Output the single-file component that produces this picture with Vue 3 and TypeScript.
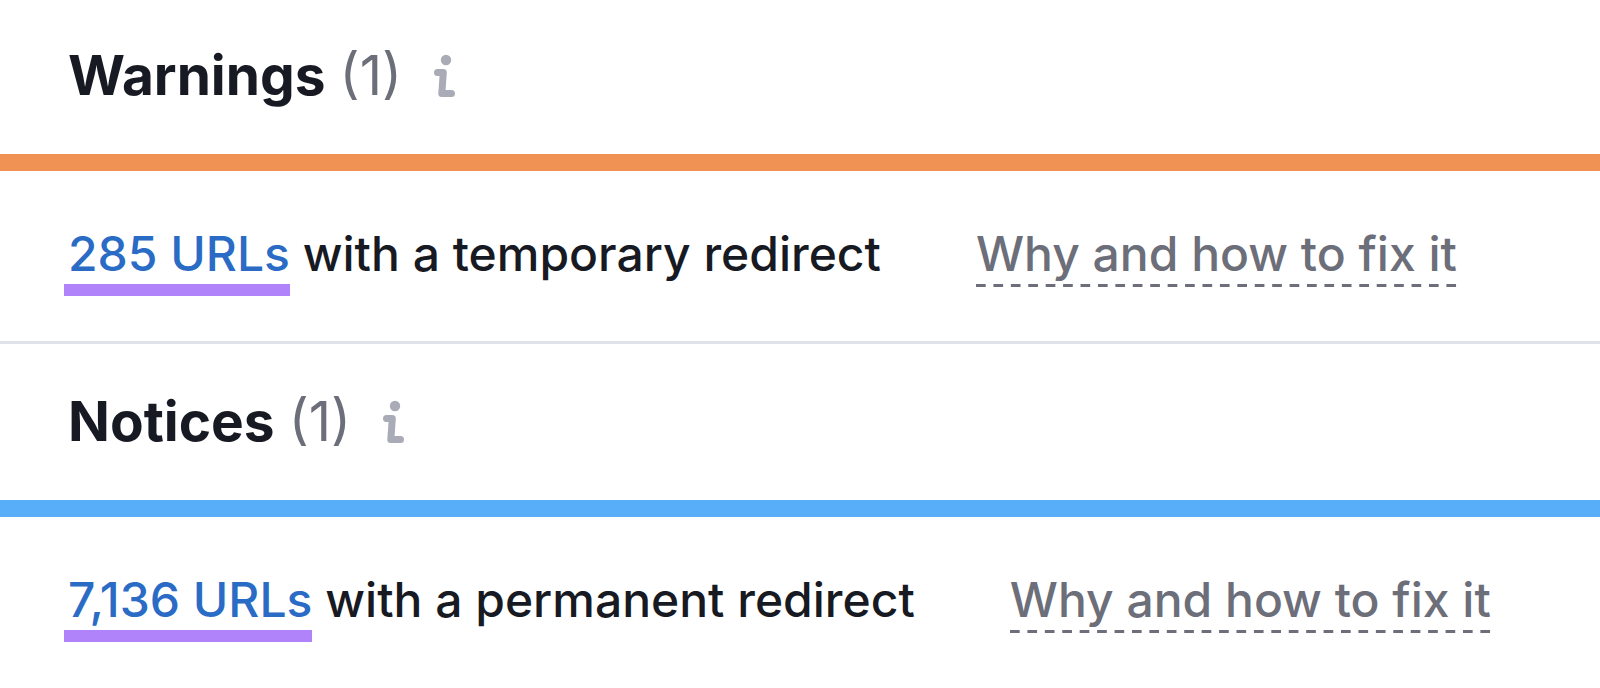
<script setup lang="ts">
interface Group {
  key: string
  title: string
  count: number
  urls: string
  text: string
}
const groups: Group[] = [
  { key: 'warning', title: 'Warnings', count: 1, urls: '285 URLs', text: 'with a temporary redirect' },
  { key: 'notice', title: 'Notices', count: 1, urls: '7,136 URLs', text: 'with a permanent redirect' },
]
</script>

<template>
  <main class="issues">
    <section v-for="g in groups" :key="g.key" class="group" :class="g.key">
      <header class="head">
        <h2 class="title">{{ g.title }}</h2>
        <span class="count">({{ g.count }})</span>
        <button class="info" type="button" :aria-label="'About ' + g.title">
          <svg width="22" height="43" viewBox="0 0 22 43" fill="none">
            <circle cx="12" cy="6" r="5.2" fill="currentColor" />
            <path d="M3.5 18.5H9.3L7.8 39.5H17.5" stroke="currentColor" stroke-width="7" stroke-linecap="round" stroke-linejoin="round" />
          </svg>
        </button>
      </header>
      <div class="row">
        <p class="issue"><a class="urls" href="#">{{ g.urls }}</a> {{ g.text }}</p>
        <button class="fix" type="button">Why and how to fix it</button>
      </div>
    </section>
  </main>
</template>

<style>
body {
  margin: 0;
  background: #fff;
}
</style>

<style scoped>
.issues {
  font-family: Inter, "Liberation Sans", sans-serif;
  color: #171a22;
}
.group + .group {
  border-top: 3px solid #e0e1e9;
}
.head {
  display: flex;
  align-items: center;
  padding: 43px 68px 47px;
  border-bottom: 17px solid #ef9253;
}
.notice .head {
  padding-top: 45px;
  border-bottom-color: #59aefa;
}
.title {
  margin: 0;
  font-size: 55px;
  line-height: 64px;
  font-weight: 700;
}
.count {
  margin-left: 14px;
  font-size: 55px;
  line-height: 64px;
  color: #6c6e79;
}
.info {
  display: flex;
  margin: 0 0 0 32px;
  padding: 0;
  border: 0;
  background: none;
  color: #a9abb6;
}
.row {
  display: flex;
  align-items: flex-start;
  gap: 95px;
  padding: 53px 68px 57px;
  font-size: 48px;
  line-height: 60px;
  font-weight: 450;
  white-space: nowrap;
}
.issue {
  margin: 0;
}
.urls {
  position: relative;
  color: #2a6bc5;
  text-decoration: none;
}
.urls::after {
  content: "";
  position: absolute;
  left: -4px;
  right: 0;
  bottom: -13px;
  height: 12px;
  background: #b083fa;
}
.fix {
  position: relative;
  padding: 0;
  border: 0;
  background: none;
  font: inherit;
  color: #6c6e79;
}
.fix::after {
  content: "";
  position: absolute;
  left: 0;
  right: 0;
  bottom: -3px;
  height: 3px;
  background: linear-gradient(90deg, currentColor 10px, transparent 10px) 0 0 / calc((100% + 7px) / 28) 3px repeat-x;
}
</style>
